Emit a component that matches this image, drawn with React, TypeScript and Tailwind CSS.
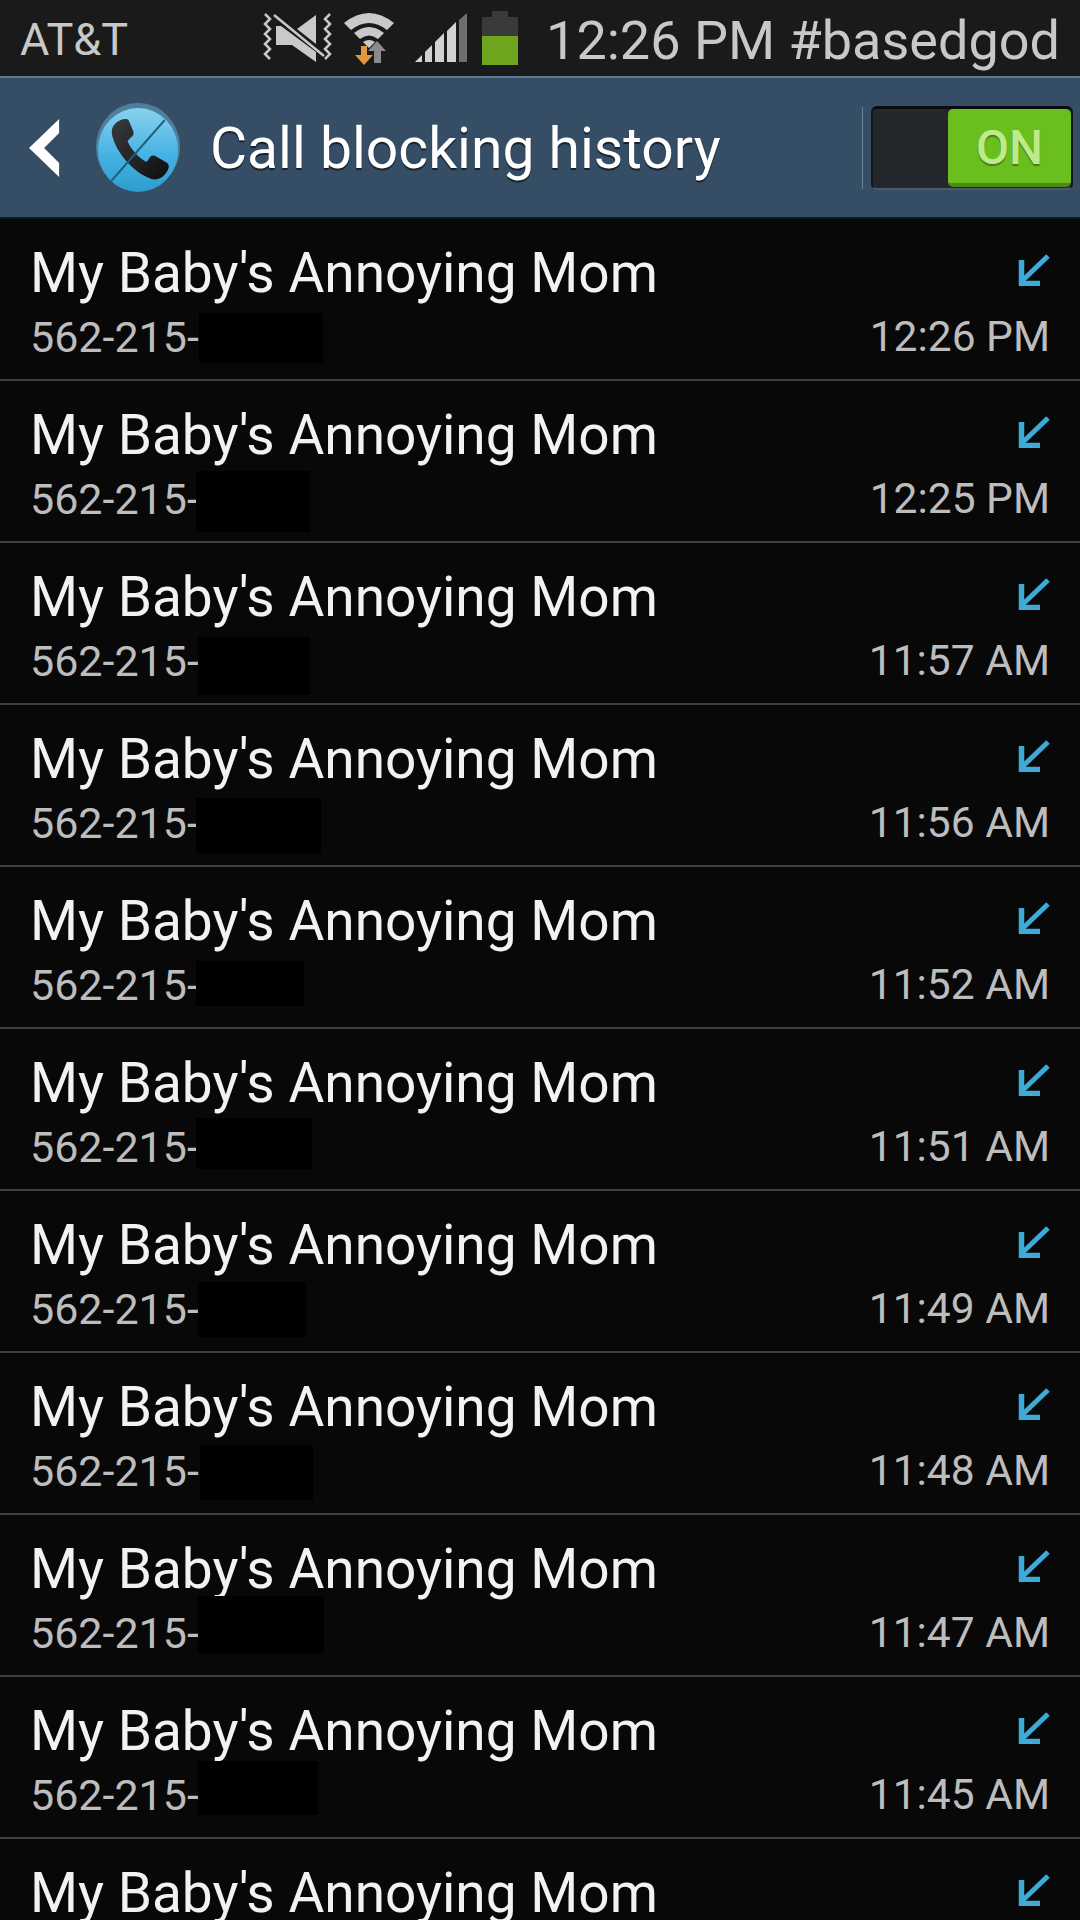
const rows = [
  { t: "12:26 PM", l: 199, w: 124, top: 94, h: 50 },
  { t: "12:25 PM", l: 196, w: 114, top: 90, h: 61 },
  { t: "11:57 AM", l: 198, w: 112, top: 94, h: 58 },
  { t: "11:56 AM", l: 196, w: 125, top: 93, h: 55 },
  { t: "11:52 AM", l: 196, w: 108, top: 94, h: 45 },
  { t: "11:51 AM", l: 196, w: 116, top: 89, h: 51 },
  { t: "11:49 AM", l: 198, w: 108, top: 91, h: 55 },
  { t: "11:48 AM", l: 200, w: 113, top: 92, h: 55 },
  { t: "11:47 AM", l: 198, w: 126, top: 81, h: 57 },
  { t: "11:45 AM", l: 198, w: 120, top: 84, h: 54 },
  { t: "", l: 0, w: 0, top: 0, h: 0 },
];

function Arrow() {
  return (
    <svg width="32" height="32" viewBox="0 0 32 32" className="block">
      <path d="M30 2 L4 27" stroke="#3eaad8" strokeWidth="5" fill="none" />
      <path d="M3.5 6 V29.5 H22" stroke="#3eaad8" strokeWidth="5.5" fill="none" />
    </svg>
  );
}

function MuteIcon() {
  return (
    <svg width="72" height="52" viewBox="0 0 72 52" className="block">
      <path d="M3 2 l5 5 l-5 5 l5 5 l-5 5 l5 5 l-5 5 l5 5 l-5 5 l5 5" stroke="#c9c9c9" strokeWidth="2.5" fill="none" />
      <path d="M68 2 l-5 5 l5 5 l-5 5 l5 5 l-5 5 l5 5 l-5 5 l5 5 l-5 5" stroke="#c9c9c9" strokeWidth="2.5" fill="none" />
      <path d="M14 14 H19 L54 40 V50 L30 33 H14 Z" fill="#c9c9c9" />
      <path d="M35 17 L54 3 V32 Z" fill="#c9c9c9" />
      <path d="M12 3 L62 44" stroke="#c9c9c9" strokeWidth="2.5" />
    </svg>
  );
}

function WifiIcon() {
  return (
    <svg width="52" height="56" viewBox="0 0 52 56" className="block">
      <path d="M1 13 Q26 -7 51 13 L44 20 Q26 6 8 20 Z" fill="#c9c9c9" />
      <path d="M11 23 Q26 11 41 23 L35 29 Q26 22 17 29 Z" fill="#c9c9c9" />
      <path d="M20 32 Q26 28 32 32 L26 38 Z" fill="#c9c9c9" />
      <path d="M18 36 h6 v9 h6 l-9 10 l-9 -10 h6 Z" fill="#e0983c" />
      <path d="M34 31 l9 10 h-5 v12 h-7 v-12 h-6 Z" fill="#8a8a8a" />
    </svg>
  );
}

function SignalIcon() {
  return (
    <svg width="52" height="50" viewBox="0 0 52 50" className="block">
      <path d="M0 49 L7 42 V49 Z" fill="#d2d2d2" />
      <path d="M10 39 L17 32 V49 H10 Z" fill="#d2d2d2" />
      <path d="M20 29 L29 20 V49 H20 Z" fill="#d2d2d2" />
      <path d="M32 18 L41 9 V49 H32 Z" fill="#d2d2d2" />
      <path d="M44 7 L52 0 V49 H44 Z" fill="#6e6e6e" />
    </svg>
  );
}

function Battery() {
  return (
    <div className="flex flex-col items-center w-[36px] h-[54px]">
      <div className="w-[16px] h-[6px] bg-[#3a3a3a]" />
      <div className="w-[36px] h-[19px] bg-[#3a3a3a]" />
      <div className="w-[36px] h-[29px] bg-[#6ea51c]" />
    </div>
  );
}

function AppIcon() {
  return (
    <svg width="84" height="90" viewBox="0 0 88 90" preserveAspectRatio="none" className="block">
      <defs>
        <linearGradient id="g" x1="0" y1="0" x2="0" y2="1">
          <stop offset="0" stopColor="#8ad1ef" />
          <stop offset="0.55" stopColor="#46b3e4" />
          <stop offset="1" stopColor="#2f9ccf" />
        </linearGradient>
        <linearGradient id="p" x1="0" y1="0" x2="1" y2="1">
          <stop offset="0" stopColor="#3a3a3c" />
          <stop offset="1" stopColor="#0e0e10" />
        </linearGradient>
      </defs>
      <circle cx="44" cy="44" r="44" fill="#4f7f9c" />
      <circle cx="44" cy="47" r="42" fill="url(#g)" />
      <path d="M24 18 C20 20 15 24 17 33 C22 50 38 69 58 76 C66 78 74 72 76 65 C77 62 75 60 73 59 L62 53 C59 52 57 53 56 55 L53 59 C46 56 36 46 33 38 L37 34 C39 33 40 31 39 28 L34 17 C32 15 27 16 24 18 Z" fill="url(#p)" />
      <path d="M72 17 L16 78" stroke="#1d5f80" strokeWidth="2" />
    </svg>
  );
}

function Toggle() {
  return (
    <div className="flex items-center gap-[8px]">
      <div className="w-px h-[82px] bg-[#6b8196]" />
      <div className="w-[202px] h-[84px] rounded-[6px] bg-[#24272c] border-t-[3px] border-x-[2px] border-b-[2px] border-t-[#0a0c10] border-x-[#14181d] border-b-[#4a5a68] flex justify-end">
        <div className="w-[123px] h-[78px] rounded-[5px] bg-[#6abf1e] border-b-[4px] border-b-[#4d8a17] flex items-center justify-center pt-[5px]">
          <span className="text-[48px] leading-none font-medium text-[#bdea8a] [text-shadow:0_2px_1px_rgba(60,110,20,0.8)] [font-family:Roboto,sans-serif]">ON</span>
        </div>
      </div>
    </div>
  );
}

export default function App() {
  return (
    <div className="w-[1080px] h-[1920px] overflow-hidden bg-[#080808] [font-family:Roboto,sans-serif]">
      <div className="h-[76px] bg-[#1a1a1a] flex items-center pl-[20px] pr-[20px] text-[#c8c8c8]">
        <span className="text-[45px] leading-none mr-[134px] mt-[2px]">AT&amp;T</span>
        <MuteIcon />
        <div className="w-[9px]" />
        <WifiIcon />
        <div className="w-[20px]" />
        <SignalIcon />
        <div className="w-[15px]" />
        <Battery />
        <span className="ml-auto text-[54px] leading-none whitespace-nowrap mt-[6px]">12:26 PM #basedgod</span>
      </div>
      <div className="h-[143px] bg-[#354e66] border-t-[2px] border-t-[#5f7a94] border-b-[2px] border-b-[#0a1a28] flex items-center">
        <svg width="32" height="58" viewBox="0 0 34 58" preserveAspectRatio="none" className="block ml-[29px]">
          <path d="M32 0 V14 L16 29 L32 44 V58 L0 29 Z" fill="#ffffff" />
        </svg>
        <div className="ml-[35px]">
          <AppIcon />
        </div>
        <span className="ml-[30px] mt-[2px] text-[57px] leading-none text-white [text-shadow:0_2px_1px_rgba(0,0,0,0.6)]">Call blocking history</span>
        <div className="ml-auto mr-[7px]">
          <Toggle />
        </div>
      </div>
      {rows.map((r, i) => (
        <div key={i} className="relative h-[162px] border-b-[2px] border-b-[#3f3f3f] pl-[30px] pr-[30px]">
          <div className="flex justify-between items-start pt-[24px]">
            <span className="text-[55px] leading-[60px] text-[#f2f2f2]">My Baby's Annoying Mom</span>
            <div className="pt-[11px]"><Arrow /></div>
          </div>
          <div className="flex justify-between items-center mt-[9px]">
            <span className="text-[43px] leading-[48px] text-[#bdbdbd]">562-215-</span>
            <span className="text-[42.5px] leading-[48px] text-[#bdbdbd] pt-[1px]">{r.t}</span>
          </div>
          {r.w > 0 && (
            <div className="absolute bg-black" style={{ left: r.l, top: r.top, width: r.w, height: r.h }} />
          )}
        </div>
      ))}
    </div>
  );
}
